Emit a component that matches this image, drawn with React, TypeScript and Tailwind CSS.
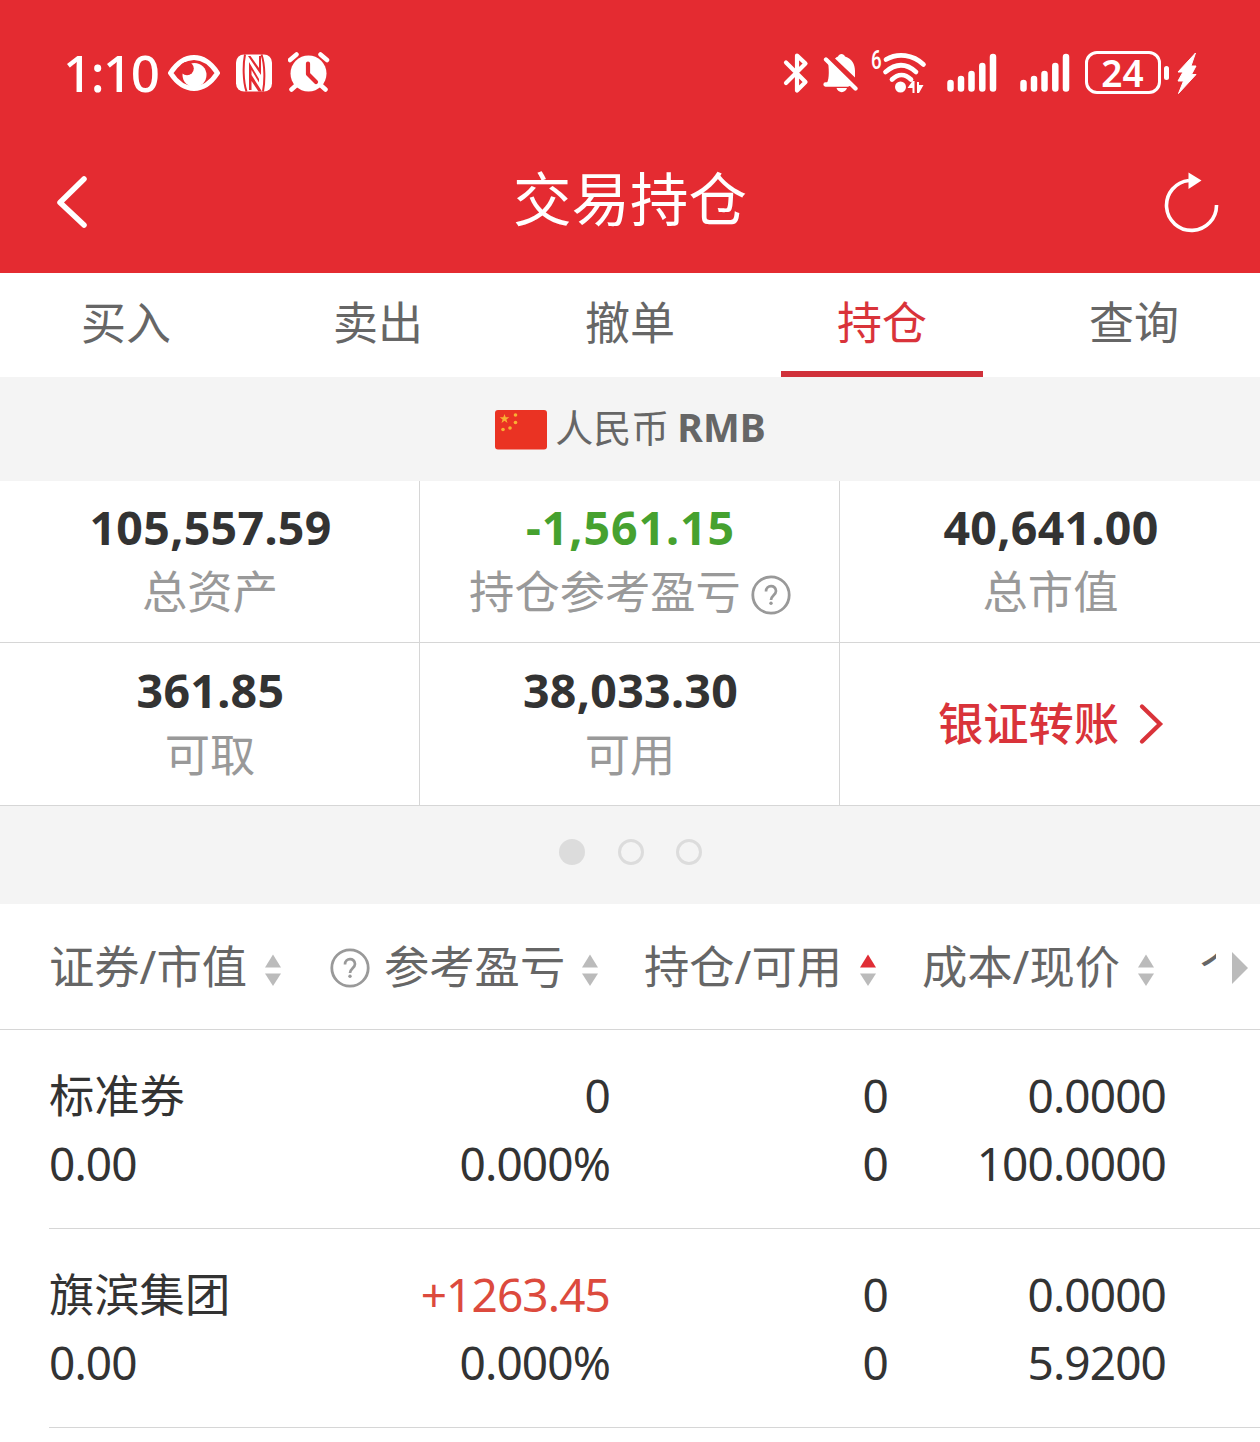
import clsx from "clsx"

const tabs = ["买入", "卖出", "撤单", "持仓", "查询"]
const activeTab = "持仓"

const holdings = [
  { name: "标准券", value: "0.00", profit: "0", rate: "0.000%", amount: "0", available: "0", cost: "0.0000", price: "100.0000" },
  { name: "旗滨集团", value: "0.00", profit: "+1263.45", rate: "0.000%", amount: "0", available: "0", cost: "0.0000", price: "5.9200" },
]

function Signal({ className }: { className?: string }) {
  return (
    <svg viewBox="0 0 50 42" className={clsx("h-[42px] w-[50px] shrink-0", className)} stroke="#fff" strokeWidth="6.500" strokeLinecap="round">
      <path d="M3.500 31v5.500M14 27v9.500M24.500 22v14.500M35.300 14v22.500M46 5v31.500" />
    </svg>
  )
}

function StatusBar() {
  return (
    <div className="flex h-[145px] items-center text-white">
      <div className="ml-[63px] mt-[-2px] w-[105px] whitespace-nowrap text-[51px] font-medium leading-[60px] tracking-[-1.5px]">1:10</div>
      <svg viewBox="168 50 52 44" className="h-[44px] w-[52px]">
        <path d="M170.500 72C177 62 185 56.500 194 56.500S211 62 217.500 72C211 82 203 87.500 194 87.500S177 82 170.500 72Z" fill="none" stroke="#fff" strokeWidth="5" strokeLinejoin="round" />
        <circle cx="194.500" cy="74" r="12" fill="#fff" />
        <circle cx="187" cy="67.500" r="6.800" fill="#e42b31" />
      </svg>
      <svg viewBox="236 52 36 40" className="ml-[16px] h-[40px] w-[36px]">
        <rect x="236" y="53.500" width="36" height="37" rx="8" fill="#fff" />
        <path d="M245 53.500c-2 10-2 27 1.500 37M263 90.500c2-10 2-27-1.500-37" fill="none" stroke="#e42b31" strokeWidth="2" />
        <path d="M249 89V61L259 78V81.500L251.500 69V89ZM259 55V67L250.500 55H248L261 74V55ZM251.500 74L262 90.500H258.500L251.500 80Z" fill="#e42b31" />
      </svg>
      <svg viewBox="288 52 42 42" className="ml-[16px] h-[42px] w-[42px]">
        <circle cx="308.500" cy="73.500" r="18" fill="#fff" />
        <path d="M290 60l6.500-5.500M327 60l-6.500-5.500M296.500 85l-5 4.500M320.500 85l5 4.500" fill="none" stroke="#fff" strokeWidth="4.500" strokeLinecap="round" />
        <path d="M308 63.500V74l8 8" fill="none" stroke="#e42b31" strokeWidth="4.200" strokeLinecap="round" strokeLinejoin="round" />
      </svg>

      <svg viewBox="783 51 26 42" className="ml-[453px] h-[42px] w-[26px]" fill="none" stroke="#fff" strokeWidth="4.200" strokeLinecap="round" strokeLinejoin="round">
        <path d="M786 61.500L805.500 81 797 89.500V54.500L805.500 62.500 786 82" />
      </svg>
      <svg viewBox="823 51 36 42" className="ml-[14px] h-[42px] w-[36px]">
        <path d="M828 60L852 84H826C829 79 829.500 73 828 60ZM835 57.500C836 56.500 837 56 838 55.500C839 52 844 52 845 55.500C852 58 855 63 855 70V76.500ZM836.500 87H847C845.500 92.500 838 92.500 836.500 87Z" fill="#fff" />
        <path d="M826 58.500L855.500 87.500M825.500 83.500H848" stroke="#fff" strokeWidth="4.300" strokeLinecap="round" />
      </svg>
      <div className="ml-[12px] mt-[-24px] w-[10px] origin-left scale-x-[0.75] font-[Roboto] text-[25px] font-medium leading-[24px]">6</div>
      <svg viewBox="881 50 46 44" className="h-[44px] w-[46px]">
        <path d="M886 58.500C898 51.500 913 53.500 923.500 63.500M885.500 71C896 62 906 62 916 71M892 78.500c6-6 13-6 19 0" fill="none" stroke="#fff" strokeWidth="4.700" strokeLinecap="round" />
        <circle cx="900.500" cy="86" r="5.500" fill="#fff" />
        <path d="M907.500 87l5-7h2v12h-2v-5ZM917 92V81h2v3h4.500l-4.500 8Z" fill="#fff" />
      </svg>
      <Signal className="ml-[20px]" />
      <Signal className="ml-[23px]" />
      <div className="ml-[15px] flex h-[43px] w-[76px] shrink-0 items-center justify-center rounded-[12px] border-[3.500px] border-white pr-[1px] text-[37px] font-semibold leading-[36px]">
        24
      </div>
      <div className="ml-[3px] h-[14px] w-[5px] rounded-full bg-white" />
      <svg viewBox="1176 50 20 44" className="ml-[8px] h-[44px] w-[20px]">
        <path d="M1194.500 52L1177 71H1182L1177 80H1182.500L1177.500 92.500 1195 73.500H1190.500L1195 65H1190Z" fill="#fff" stroke="#fff" strokeLinejoin="round" />
      </svg>
    </div>
  )
}

function TitleBar() {
  return (
    <div className="flex h-[128px] justify-between pl-[56px] pr-[40px] text-white">
      <svg viewBox="0 0 34 56" className="mt-[29px] h-[56px] w-[34px]" fill="none" stroke="#fff" strokeWidth="5.500" strokeLinecap="round" strokeLinejoin="round">
        <path d="M28 5L4 28.500 28 51" />
      </svg>
      <h1 className="ml-[6px] mt-[13px] text-[58.500px] leading-[80px]">交易持仓</h1>
      <svg viewBox="1164 170 56 64" className="mt-[25px] h-[64px] w-[56px]">
        <path d="M1216.500 205A25 25 0 1 1 1189 180.500" fill="none" stroke="#fff" strokeWidth="3.600" />
        <path d="M1188.500 172.500V189L1201.500 180.500Z" fill="#fff" />
      </svg>
    </div>
  )
}

function HelpIcon({ className }: { className?: string }) {
  return (
    <svg viewBox="0 0 40 40" className={clsx("h-[40px] w-[40px] shrink-0", className)} fill="none" stroke="#999">
      <circle cx="20" cy="20" r="18.200" strokeWidth="2.800" />
      <path d="M15 16.500c0-7 10-7 10-.5 0 4-5 4.500-5 9" strokeWidth="2.700" />
      <circle cx="20" cy="28.300" r="1.700" fill="#999" stroke="none" />
    </svg>
  )
}

function SortIcon({ active }: { active?: boolean }) {
  return (
    <svg viewBox="0 0 18 34" className="mt-[7px] h-[34px] w-[18px] shrink-0">
      <path d="M9 1.500L17 14.500H1Z" fill={active ? "#e02d35" : "#bbb"} />
      <path d="M9 33L1 20.500H17Z" fill="#bbb" />
    </svg>
  )
}

function Flag() {
  return (
    <svg viewBox="0 0 52 40" className="mt-[5px] h-[40px] w-[52px]">
      <rect width="52" height="39.500" rx="3" fill="#ea3323" />
      <g fill="#f8b133">
        <path d="M9.500 4l1.200 3.300h3.600l-2.900 2.100 1.100 3.500-3-2.100-3 2.100 1.100-3.500-2.900-2.100h3.600Z" />
        <circle cx="20.500" cy="5" r="1.800" />
        <circle cx="20.500" cy="12.500" r="1.800" />
        <circle cx="15" cy="18" r="1.800" />
        <circle cx="8" cy="19.500" r="1.800" />
      </g>
    </svg>
  )
}

function Stat({ value, label, green, help, className }: { value: string; label: string; green?: boolean; help?: boolean; className?: string }) {
  return (
    <div className={clsx("flex flex-col items-center border-[#d6d6d6]", className)}>
      <div className={clsx("pl-[2px] text-[46.500px] font-bold leading-[64px]", green ? "tracking-[0.9px] text-[#46a12f]" : "tracking-[0.3px] text-[#333]")}>{value}</div>
      <div className="flex items-center pl-[1px] pt-[1px] text-[45.300px] leading-[64px] text-[#999]">
        {label}
        {help && <HelpIcon className="ml-[10px] mt-[6px]" />}
      </div>
    </div>
  )
}

export default function App() {
  return (
    <div className="h-[1442px] w-[1260px] overflow-hidden bg-white font-['Noto_Sans','Noto_Sans_CJK_SC',sans-serif]">
      <header className="h-[273px] bg-[#e42b31]">
        <StatusBar />
        <TitleBar />
      </header>

      <nav className="grid h-[104px] grid-cols-5">
        {tabs.map((tab) => (
          <button
            key={tab}
            className={clsx(
              "mx-[25px] border-b-[6px] pt-[2px] text-[45px] leading-[96px]",
              tab === activeTab ? "border-[#d0313a] text-[#d9333a]" : "border-transparent text-[#666]"
            )}
          >
            {tab}
          </button>
        ))}
      </nav>

      <div className="flex h-[104px] items-center justify-center bg-[#f4f4f4] pb-[4px] pl-[1px] text-[38px] leading-[60px] text-[#666]">
        <Flag />
        <span className="ml-[8px]">人民币</span>
        <span className="ml-[8px] text-[39px] font-bold">RMB</span>
      </div>

      <section className="grid grid-cols-3 grid-rows-[162px_163px]">
        <Stat value="105,557.59" label="总资产" className="border-b border-r pt-[14px]" />
        <Stat value="-1,561.15" label="持仓参考盈亏" green help className="border-b border-r pt-[14px]" />
        <Stat value="40,641.00" label="总市值" className="border-b pt-[14px]" />
        <Stat value="361.85" label="可取" className="border-b border-r pt-[15px]" />
        <Stat value="38,033.30" label="可用" className="border-b border-r pt-[15px]" />
        <button className="flex items-center justify-center border-b border-[#d6d6d6] pl-[2px] text-[45.300px] font-medium leading-[64px] text-[#d9333a]">
          银证转账
          <svg viewBox="0 0 26 42" className="ml-[19px] h-[42px] w-[26px]" fill="none" stroke="#d9333a" strokeWidth="4.300" strokeLinecap="round">
            <path d="M4 3.500L22 21 4 38.500" />
          </svg>
        </button>
      </section>

      <div className="flex h-[98px] justify-center gap-[32.500px] bg-[#f4f4f4] pl-[1px] pt-[33px]">
        <i className="size-[26px] rounded-full bg-[#dcdcdc]" />
        <i className="size-[26px] rounded-full border-[3px] border-[#dcdcdc]" />
        <i className="size-[26px] rounded-full border-[3px] border-[#dcdcdc]" />
      </div>

      <div className="flex h-[126px] items-center whitespace-nowrap border-b border-[#d6d6d6] pl-[49px] text-[45.300px] leading-[66px] text-[#666]">
        <div className="flex w-[281px] items-center gap-[17px]">证券/市值<SortIcon /></div>
        <div className="flex w-[269px] items-center">
          <HelpIcon className="mr-[14px] mt-[2px]" />
          <span className="mr-[16px]">参考盈亏</span>
          <SortIcon />
        </div>
        <div className="flex w-[278px] items-center justify-end gap-[17px]">持仓/可用<SortIcon active /></div>
        <div className="flex w-[278px] items-center justify-end gap-[17px]">成本/现价<SortIcon /></div>
        <div className="ml-[45px] w-[16px] overflow-hidden">个</div>
        <svg viewBox="0 0 16 32" className="ml-[16px] mt-[3px] h-[32px] w-[16px] shrink-0">
          <path d="M0 0L16 16 0 32Z" fill="#bbb" />
        </svg>
      </div>

      {holdings.map((item) => (
        <div key={item.name} className="ml-[49px] grid h-[199px] grid-cols-[283px_278px_278px_278px] grid-rows-[68px_68px] border-b border-[#d6d6d6] pt-[31px] text-right text-[46px] leading-[68px] tracking-[-0.9px] text-[#333]">
          <div className="pt-[1px] text-left text-[45.300px] tracking-normal">{item.name}</div>
          <div className={clsx(item.profit.startsWith("+") && "text-[#dc4a3d]")}>{item.profit}</div>
          <div>{item.amount}</div>
          <div>{item.cost}</div>
          <div className="text-left">{item.value}</div>
          <div>{item.rate}</div>
          <div>{item.available}</div>
          <div>{item.price}</div>
        </div>
      ))}
    </div>
  )
}
